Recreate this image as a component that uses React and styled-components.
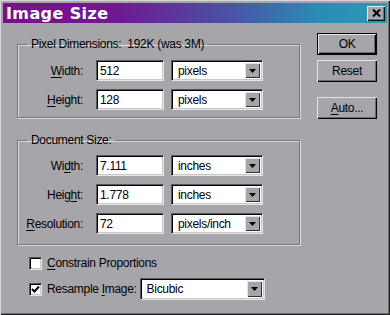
import React from "react";
import styled, { createGlobalStyle } from "styled-components";

const Global = createGlobalStyle`
  html, body {
    margin: 0;
    padding: 0;
    background: #a6a6aa;
  }
  * {
    box-sizing: border-box;
  }
`;

const Window = styled.div`
  width: 390px;
  height: 315px;
  background: #a6a6aa;
  font-family: "Liberation Sans", Arial, sans-serif;
  font-size: 12px;
  letter-spacing: -0.3px;
  color: #000;
  padding: 3px;
  box-shadow: inset 1px 1px 0 #d8d8dc, inset -1px -1px 0 #1e1e1e,
    inset -2px -2px 0 #6e6e72;
  overflow: hidden;
`;

const TitleBar = styled.div`
  height: 20px;
  display: flex;
  align-items: center;
  justify-content: space-between;
  padding: 0 2px 0 3px;
  background: linear-gradient(90deg, #7a1087 0%, #701894 30%, #4c50a6 58%, #2a8cb4 82%, #2a9ab8 100%);
`;

const Title = styled.span`
  font-family: "DejaVu Sans", Verdana, sans-serif;
  font-weight: bold;
  font-size: 16px;
  color: #fff;
  letter-spacing: 0.4px;
`;

const CloseButton = styled.div`
  width: 18px;
  height: 15px;
  background: #a6a6aa;
  box-shadow: inset 1px 1px 0 #e8e8ec, inset -1px -1px 0 #101010,
    inset -2px -2px 0 #707074;
  display: flex;
  align-items: center;
  justify-content: center;
`;

const Body = styled.div`
  display: flex;
  padding: 14px 0 0 14px;
`;

const LeftColumn = styled.div`
  width: 283px;
  display: flex;
  flex-direction: column;
`;

const Group = styled.fieldset`
  margin: 0 0 ${(p) => p.$gap || 0}px;
  padding: ${(p) => p.$pad};
  border: 1px solid #77777b;
  box-shadow: inset 1px 1px 0 #dcdce0, 1px 1px 0 #dcdce0;
  display: flex;
  flex-direction: column;
  gap: 8px;
  min-width: 0;
`;

const Legend = styled.legend`
  margin-left: 6px;
  padding: 0 3px 0 4px;
  white-space: pre;
  line-height: 14px;
`;

const Row = styled.div`
  display: flex;
  align-items: center;
  height: 21px;
`;

const Label = styled.label`
  width: 62px;
  text-align: right;
  margin-right: 13px;
  white-space: nowrap;
`;

const Key = styled.span`
  text-decoration: underline;
  text-underline-offset: 2px;
`;

const TextBox = styled.div`
  width: 68px;
  height: 21px;
  background: #fff;
  border: 1px solid;
  border-color: #58585c #e6e6ea #e6e6ea #58585c;
  box-shadow: inset 1px 1px 0 #000, inset -1px -1px 0 #c8c8cc;
  padding: 3px 0 0 3px;
  line-height: 14px;
  margin-right: 7px;
`;

const Select = styled.div`
  width: ${(p) => p.$width || 92}px;
  height: ${(p) => p.$height || 21}px;
  background: #fff;
  border: 1px solid;
  border-color: #58585c #e6e6ea #e6e6ea #58585c;
  box-shadow: inset 1px 1px 0 #000, inset -1px -1px 0 #c8c8cc;
  display: flex;
  align-items: stretch;
  padding: 2px;
`;

const SelectValue = styled.div`
  flex: 1;
  display: flex;
  align-items: center;
  padding-left: 4px;
`;

const ArrowButton = styled.div`
  width: 15px;
  background: #a6a6aa;
  box-shadow: inset 1px 1px 0 #e4e4e8, inset -1px -1px 0 #303034;
  display: flex;
  align-items: center;
  justify-content: center;
`;

const CheckRow = styled.div`
  display: flex;
  align-items: center;
  height: ${(p) => p.$height}px;
  padding-left: 12px;
  margin-top: ${(p) => p.$top || 0}px;
`;

const CheckBox = styled.div`
  width: 13px;
  height: 13px;
  background: #fff;
  border: 1px solid;
  border-color: #58585c #e6e6ea #e6e6ea #58585c;
  box-shadow: inset 1px 1px 0 #000, inset -1px -1px 0 #c8c8cc;
  margin-right: 5px;
  display: flex;
  align-items: center;
  justify-content: center;
`;

const CheckLabel = styled.span`
  margin-right: 3px;
`;

const RightColumn = styled.div`
  margin-left: 17px;
  display: flex;
  flex-direction: column;
  width: 60px;
`;

const Button = styled.div`
  height: 22px;
  display: flex;
  align-items: center;
  justify-content: center;
  background: #a6a6aa;
  margin-top: ${(p) => p.$top || 0}px;
  border: ${(p) => (p.$default ? "1px solid #000" : "0")};
  box-shadow: inset 1px 1px 0 #e4e4e8, inset -1px -1px 0 #000,
    inset -2px -2px 0 #6a6a6e;
`;

const Arrow = () => (
  <svg width="7" height="4" viewBox="0 0 7 4">
    <path d="M0 0h7L3.5 4z" fill="#000" />
  </svg>
);

function Field({ label, keyIndex, value, unit }) {
  return (
    <Row>
      <Label>
        {label.slice(0, keyIndex)}
        <Key>{label[keyIndex]}</Key>
        {label.slice(keyIndex + 1)}
      </Label>
      <TextBox>{value}</TextBox>
      <Select>
        <SelectValue>{unit}</SelectValue>
        <ArrowButton>
          <Arrow />
        </ArrowButton>
      </Select>
    </Row>
  );
}

export default function App() {
  return (
    <Window>
      <Global />
      <TitleBar>
        <Title>Image Size</Title>
        <CloseButton>
          <svg width="9" height="8" viewBox="0 0 9 8">
            <path d="M1 0.5l7 7M8 0.5l-7 7" stroke="#000" strokeWidth="2" />
          </svg>
        </CloseButton>
      </TitleBar>
      <Body>
        <LeftColumn>
          <Group $pad="9px 4px 7px 3px" $gap={15}>
            <Legend>Pixel Dimensions:  192K (was 3M)</Legend>
            <Field label="Width:" keyIndex={0} value="512" unit="pixels" />
            <Field label="Height:" keyIndex={0} value="128" unit="pixels" />
          </Group>
          <Group $pad="8px 4px 10px 3px">
            <Legend>Document Size:</Legend>
            <Field label="Width:" keyIndex={2} value="7.111" unit="inches" />
            <Field label="Height:" keyIndex={4} value="1.778" unit="inches" />
            <Field label="Resolution:" keyIndex={0} value="72" unit="pixels/inch" />
          </Group>
          <CheckRow $height={14} $top={11}>
            <CheckBox />
            <CheckLabel>
              <Key>C</Key>onstrain Proportions
            </CheckLabel>
          </CheckRow>
          <CheckRow $height={22} $top={8}>
            <CheckBox>
              <svg width="9" height="9" viewBox="0 0 9 9">
                <path d="M1 4l2.5 2.5L8 1.5" stroke="#000" strokeWidth="2" fill="none" />
              </svg>
            </CheckBox>
            <CheckLabel>
              Resample <Key>I</Key>mage:
            </CheckLabel>
            <Select $width={125} $height={22}>
              <SelectValue>Bicubic</SelectValue>
              <ArrowButton>
                <Arrow />
              </ArrowButton>
            </Select>
          </CheckRow>
        </LeftColumn>
        <RightColumn>
          <Button $default $top={-4}>OK</Button>
          <Button $top={5}>Reset</Button>
          <Button $top={15}>
            <span>
              <Key>A</Key>uto...
            </span>
          </Button>
        </RightColumn>
      </Body>
    </Window>
  );
}
